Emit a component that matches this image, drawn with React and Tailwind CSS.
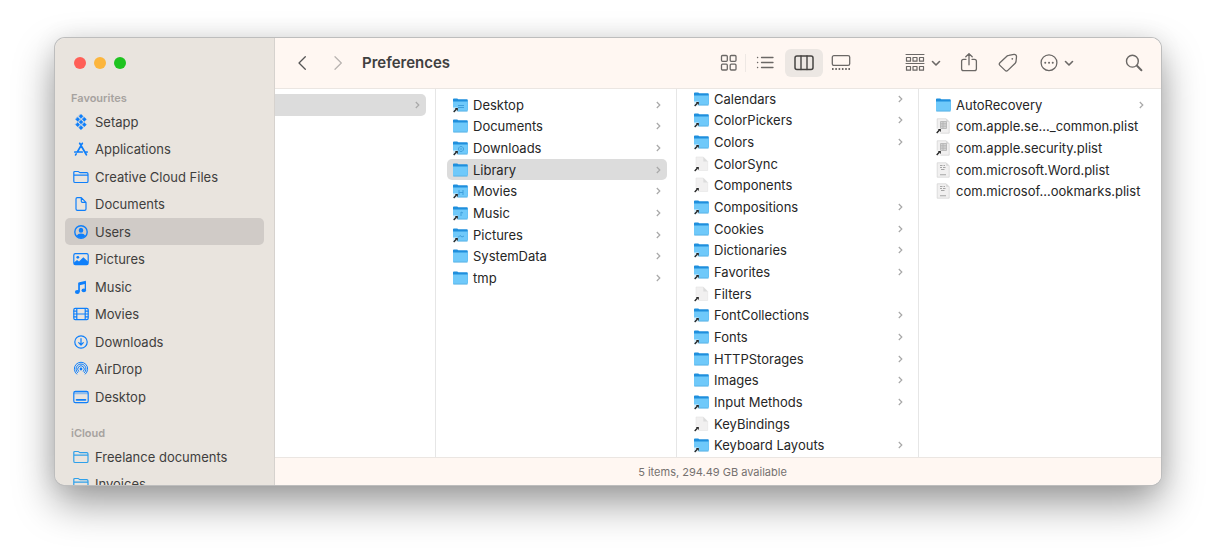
import React from 'react';

const favourites = [
  { label: 'Setapp', icon: 'setapp' },
  { label: 'Applications', icon: 'apps' },
  { label: 'Creative Cloud Files', icon: 'folder' },
  { label: 'Documents', icon: 'document' },
  { label: 'Users', icon: 'user', selected: true },
  { label: 'Pictures', icon: 'picture' },
  { label: 'Music', icon: 'music' },
  { label: 'Movies', icon: 'movie' },
  { label: 'Downloads', icon: 'download' },
  { label: 'AirDrop', icon: 'airdrop' },
  { label: 'Desktop', icon: 'desktop' }
];

const icloud = [
  { label: 'Freelance documents', icon: 'cloudFolder' },
  { label: 'Invoices', icon: 'cloudFolder' }
];

const homeItems = [
  { name: 'Desktop', kind: 'folder', alias: true, badge: 'M5 8.5h6M5 10.5h6' },
  { name: 'Documents', kind: 'folder' },
  { name: 'Downloads', kind: 'folder', alias: true, badge: 'M8 6.5a2.5 2.5 0 1 0 .01 0M8 8v2' },
  { name: 'Library', kind: 'folder', selected: true },
  { name: 'Movies', kind: 'folder', alias: true, badge: 'M6 7v5M10 7v5M6 9.5h4' },
  { name: 'Music', kind: 'folder', alias: true, badge: 'M8 11V7l2 1' },
  { name: 'Pictures', kind: 'folder', alias: true, badge: 'M5 10.5l2-2 2 1.5 2-1' },
  { name: 'SystemData', kind: 'folder' },
  { name: 'tmp', kind: 'folder' }
];

const libraryItems = [
  { name: 'Calendars', kind: 'folder', alias: true },
  { name: 'ColorPickers', kind: 'folder', alias: true },
  { name: 'Colors', kind: 'folder', alias: true },
  { name: 'ColorSync', kind: 'file', alias: true },
  { name: 'Components', kind: 'file', alias: true },
  { name: 'Compositions', kind: 'folder', alias: true },
  { name: 'Cookies', kind: 'folder' },
  { name: 'Dictionaries', kind: 'folder', alias: true },
  { name: 'Favorites', kind: 'folder', alias: true },
  { name: 'Filters', kind: 'file', alias: true },
  { name: 'FontCollections', kind: 'folder', alias: true },
  { name: 'Fonts', kind: 'folder', alias: true },
  { name: 'HTTPStorages', kind: 'folder' },
  { name: 'Images', kind: 'folder' },
  { name: 'Input Methods', kind: 'folder', alias: true },
  { name: 'KeyBindings', kind: 'file', alias: true },
  { name: 'Keyboard Layouts', kind: 'folder', alias: true }
];

const preferenceItems = [
  { name: 'AutoRecovery', kind: 'folder' },
  { name: 'com.apple.se…_common.plist', kind: 'plist', alias: true },
  { name: 'com.apple.security.plist', kind: 'plist', alias: true },
  { name: 'com.microsoft.Word.plist', kind: 'plist' },
  { name: 'com.microsof…ookmarks.plist', kind: 'plist' }
];

const folderOutline = (
  <path d="M.8 12.200V3.600c0-.7.4-1.100 1.100-1.100h3.300c.8 0 1 1.200 1.900 1.200h6.600c.8 0 1.300.5 1.300 1.200v7.300c0 .8-.5 1.300-1.300 1.300H2.100c-.8 0-1.300-.5-1.300-1.300zM.8 6.200H15" />
);

// Sidebar glyphs, all on a 16x16 grid
const glyphs = {
  setapp: (
    <path
      d="M8 .2l2.100 2.100L8 4.400 5.900 2.300zM4.700 3.200l2.100 2.100-2.100 2.100-2.100-2.100zM11.300 3.200l2.100 2.100-2.100 2.100-2.100-2.100zM8 5.900L10.100 8 8 10.100 5.900 8zM4.700 8.600l2.100 2.100-2.100 2.100-2.100-2.100zM11.300 8.600l2.100 2.100-2.100 2.100-2.100-2.100zM8 11.600l2.100 2.100L8 15.800l-2.100-2.100z"
      fill="currentColor"
      strokeWidth=".4"
    />
  ),
  apps: <path d="M9.300 2.300L4.300 11M6.700 2.300l6.700 11.500M1.800 11h7.400M11.800 11h2.400M3.200 12.900l-.6 1" strokeWidth="1.700" />,
  folder: folderOutline,
  cloudFolder: folderOutline,
  document: <path d="M3 13V3c0-.8.5-1.400 1.300-1.400h4L13 6.300V13c0 .9-.5 1.400-1.400 1.400H4.400C3.500 14.400 3 13.900 3 13zM8.300 1.800v3.400c0 .7.300 1.100 1.100 1.100h3.400" />,
  user: (
    <>
      <circle cx="8" cy="8" r="6.200" strokeWidth="1.400" />
      <path d="M8 3.700a2.300 2.500 0 0 1 0 5 2.300 2.500 0 0 1 0-5zM3.600 12.100c.8-1.700 2.500-2.500 4.400-2.500s3.600.8 4.400 2.500C11.200 13.400 9.700 14 8 14s-3.200-.6-4.400-1.900z" fill="currentColor" stroke="none" />
    </>
  ),
  picture: (
    <>
      <rect x=".8" y="2.600" width="14.400" height="11" rx="1.600" />
      <circle cx="4.800" cy="6.300" r="1.400" fill="currentColor" stroke="none" />
      <path d="M1 11.500l3-2.500 2 1.500L10.300 6.300 15 10.500V13.500H1z" fill="currentColor" stroke="none" />
    </>
  ),
  music: (
    <g fill="currentColor" stroke="none">
      <path d="M5.400 3.600L12.900 1.800v3L6.600 6.300v6H5.400z" />
      <path d="M11.700 3h1.300v8.400h-1.300zM5.400 4h1.300v9H5.400z" />
      <ellipse cx="4.300" cy="13" rx="2.400" ry="1.900" />
      <ellipse cx="10.800" cy="11.400" rx="2.300" ry="1.800" />
    </g>
  ),
  movie: (
    <>
      <rect x=".8" y="2.400" width="14.400" height="11.200" rx="1.400" />
      <path d="M3.800 2.500v11M12.200 2.500v11M3.800 8h8.400M1 5.200h2.800M1 8h2.800M1 10.800h2.800M12.200 5.200H15M12.200 8H15M12.200 10.800H15" />
    </>
  ),
  download: (
    <>
      <circle cx="8" cy="8" r="6.200" />
      <path d="M8 4.700v6M5.700 8.700L8 11l2.300-2.300" />
    </>
  ),
  airdrop: (
    <>
      <path d="M3.700 13.100A6.700 6.700 0 1 1 12.300 13.100M4.600 11.700a5 5 0 1 1 6.800 0M5.600 10.400a3.300 3.300 0 1 1 4.800 0" strokeWidth="1" />
      <circle cx="8" cy="8" r="1.400" fill="currentColor" stroke="none" />
    </>
  ),
  desktop: (
    <>
      <rect x=".8" y="2.400" width="14.400" height="11.200" rx="1.600" />
      <path d="M1 3h14v2.300H1z" fill="currentColor" fillOpacity=".4" stroke="none" />
      <path d="M3.500 10.900h9" strokeWidth="1.600" />
    </>
  )
};

function SidebarIcon({ name }) {
  return (
    <svg
      viewBox="0 0 16 16"
      className={name === 'cloudFolder' ? 'size-4 shrink-0 text-[#2fa0ea]' : 'size-4 shrink-0 text-[#0f7ffa]'}
      fill="none"
      stroke="currentColor"
      strokeWidth="1.200"
      strokeLinecap="round"
      strokeLinejoin="round"
      aria-hidden="true"
    >
      {glyphs[name]}
    </svg>
  );
}

function SidebarSection({ title, items }) {
  return (
    <section>
      <h2 className="flex h-5 items-center px-1.5 text-[11px] font-semibold text-[#a6a29f]">{title}</h2>
      <ul>
        {items.map(item => (
          <li key={item.label} className="h-[27px] even:h-[28px]">
            <a
              href="#"
              className={`flex h-full items-center gap-1.5 rounded-[5px] px-2 ${item.selected ? 'bg-[#d0cbc7]' : ''}`}
            >
              <SidebarIcon name={item.icon} />
              <span className="whitespace-nowrap">{item.label}</span>
            </a>
          </li>
        ))}
      </ul>
    </section>
  );
}

// Small black arrow in the lower left corner of aliases
function AliasArrow() {
  return (
    <>
      <path d="M0 10.500h4.500V16H0z" fill="#fff" fillOpacity=".75" />
      <path d="M.7 15l2.600-2.800" stroke="#222" strokeWidth="1.300" />
      <path d="M1.800 11h3v3z" fill="#222" />
    </>
  );
}

function FileIcon({ kind, alias, badge }) {
  return (
    <svg viewBox="0 0 16 16" className="size-4 shrink-0" fill="none" aria-hidden="true">
      {kind === 'folder' && (
        <>
          <path d="M0 2.300c0-.6.3-.9.900-.9h3.300c.7 0 .9.900 1.600.9h8.100c.6 0 .9.300.9.900V13H0z" fill="#1f8fdd" />
          <path d="M0 4.600h14.800v9c0 .4-.3.700-.7.700H.7c-.4 0-.7-.3-.7-.7z" fill="#6fc9fa" />
          <path d="M.3 14.100h14.200" stroke="#4fa9dc" strokeWidth=".7" />
          {badge && <path d={badge} stroke="#3f9fdc" strokeWidth="1" />}
        </>
      )}
      {kind === 'file' && (
        <>
          <path d="M2 1h7.300l4.400 4.400v9.100H2z" fill="#f1f0f0" stroke="#e4e4e4" strokeWidth=".6" />
          <path d="M9.300 1v4.400h4.400z" fill="#dcdcdc" />
        </>
      )}
      {kind === 'plist' && (
        <>
          <path d="M1.200.8h9l3 3v11.400h-12z" fill="#f1f0f0" stroke="#d3d3d3" strokeWidth=".7" />
          <path d="M10.200.8v3h3z" fill="#d5d5d5" />
          {alias ? (
            <path d="M4.500 3.500h6v7h-6zM4.500 5.800h6M4.500 8.200h6M7 3.500v7" fill="#d3d3d3" stroke="#b2b2b2" strokeWidth=".8" />
          ) : (
            <path d="M4 3.500h2.500M7.500 3.500H9M4 5.500h2M7 5.500h2.500M5 7.500h3.500M4 12.800h6" stroke="#a5a5a5" strokeWidth="1.100" />
          )}
        </>
      )}
      {alias && <AliasArrow />}
    </svg>
  );
}

function RowChevron() {
  return (
    <svg viewBox="0 0 5 8" className="ml-auto h-2 w-[5px] shrink-0" fill="none" stroke="#a8a8a8" strokeWidth="1.200" aria-hidden="true">
      <path d="M.8 1l3 3-3 3" />
    </svg>
  );
}

function FileList({ label, items, className }) {
  return (
    <ul aria-label={label} className={className}>
      {items.map(item => (
        <li key={item.name} className="h-[22px] nth-[3n+1]:h-[21px]">
          <button
            type="button"
            className={`flex h-full w-full items-center gap-1 rounded-[5px] px-1.5 text-left ${item.selected ? 'bg-[#dcdcdc]' : ''}`}
          >
            <FileIcon kind={item.kind} alias={item.alias} badge={item.badge} />
            <span className="whitespace-nowrap">{item.name}</span>
            {item.kind === 'folder' && <RowChevron />}
          </button>
        </li>
      ))}
    </ul>
  );
}

function ToolIcon({ children }) {
  return (
    <svg viewBox="0 0 20 20" className="size-5" fill="none" stroke="currentColor" strokeWidth="1.300" strokeLinecap="round" strokeLinejoin="round" aria-hidden="true">
      {children}
    </svg>
  );
}

function DownChevron() {
  return (
    <svg viewBox="0 0 10 10" className="size-2.5" fill="none" stroke="currentColor" strokeWidth="1.600" strokeLinecap="round" strokeLinejoin="round" aria-hidden="true">
      <path d="M1.500 3.500L5 7l3.500-3.500" />
    </svg>
  );
}

function Toolbar() {
  return (
    <header className="flex h-[51px] shrink-0 items-center border-b border-[#ebe6e2] bg-[#fff7f2] px-[17px] text-[#6b6866]">
      <button type="button" aria-label="Back" className="text-[#555]">
        <ToolIcon><path d="M13.300 3.800L7 10l6.300 6.200" /></ToolIcon>
      </button>
      <button type="button" aria-label="Forward" className="ml-4 text-[#b9b4b1]">
        <ToolIcon><path d="M7 3.800l6.300 6.200L7 16.200" /></ToolIcon>
      </button>
      <h1 className="ml-3.5 text-[15px] font-semibold text-[#404040]">Preferences</h1>

      {/* View modes */}
      <div className="ml-auto flex items-center">
        <button type="button" aria-label="Icons">
          <ToolIcon>
            <rect x="2.500" y="2.500" width="5.800" height="5.800" rx="1" />
            <rect x="11.200" y="2.500" width="5.800" height="5.800" rx="1" />
            <rect x="2.500" y="11.200" width="5.800" height="5.800" rx="1" />
            <rect x="11.200" y="11.200" width="5.800" height="5.800" rx="1" />
          </ToolIcon>
        </button>
        <span className="ml-1.5 h-[18px] w-px bg-[#eee8e4]" />
        <button type="button" aria-label="List" className="ml-[9px]">
          <ToolIcon><path d="M6.500 4.500H18M6.500 9.500H18M6.500 14.500H18M2.500 4.500h.2M2.500 9.500h.2M2.500 14.500h.2" /></ToolIcon>
        </button>
        <button type="button" aria-label="Columns" aria-pressed="true" className="ml-2.5 flex h-7 w-[38px] items-center justify-center rounded-md bg-[#ece7e3] text-[#464442]">
          <ToolIcon>
            <rect x="1" y="3" width="18" height="13.500" rx="2" strokeWidth="1.500" />
            <path d="M7 3v13.500M13 3v13.500" strokeWidth="1.400" />
          </ToolIcon>
        </button>
        <button type="button" aria-label="Gallery" className="ml-2">
          <ToolIcon>
            <rect x="1.300" y="2.700" width="17.400" height="9.700" rx="1.600" />
            <path d="M1 16h1.600M4.300 16h1.600M7.600 16h1.600M10.900 16h1.600M14.200 16h1.600M17.400 16H19" strokeWidth="1.900" strokeLinecap="butt" />
          </ToolIcon>
        </button>
      </div>

      {/* Actions */}
      <button type="button" aria-label="Group" className="ml-[54px] flex items-center gap-1.5">
        <ToolIcon>
          <path d="M1 1.500h18M1 10.500h18" strokeWidth="1.100" />
          <path d="M1.500 4.500h4v3.700h-4zM8 4.500h4v3.700H8zM14.500 4.500h4v3.700h-4zM1.500 13.500h4v3.700h-4zM8 13.500h4v3.700H8zM14.500 13.500h4v3.700h-4z" strokeWidth="1.200" />
        </ToolIcon>
        <DownChevron />
      </button>
      <button type="button" aria-label="Share" className="ml-[18px]">
        <ToolIcon>
          <path d="M7 6.300H4.500c-1.200 0-1.900.7-1.900 1.900v7.600c0 1.200.7 1.900 1.900 1.900h11c1.200 0 1.900-.7 1.900-1.900V8.200c0-1.200-.7-1.900-1.900-1.900H13M10 11.800V.8M6.800 3.700L10 .6l3.200 3.100" />
        </ToolIcon>
      </button>
      <button type="button" aria-label="Tags" className="ml-[19px]">
        <ToolIcon>
          <path d="M10.800 2.300L16 1.400c1.500-.2 2.600.8 2.500 2.300l-.5 5c-.1.700-.3 1-.8 1.500l-7.400 7.200c-.9.900-1.800.9-2.700 0l-5.200-5c-.9-.9-.9-1.800 0-2.700l7.200-6.700c.5-.4.900-.6 1.700-.7z" />
          <circle cx="14.300" cy="5.800" r=".9" fill="currentColor" stroke="none" />
        </ToolIcon>
      </button>
      <button type="button" aria-label="More" className="ml-[21px] flex items-center gap-[5px]">
        <ToolIcon>
          <circle cx="10" cy="9.700" r="7.900" />
          <path d="M6.200 9.700h.1M10 9.700h.1M13.700 9.700h.1" strokeWidth="1.900" />
        </ToolIcon>
        <DownChevron />
      </button>
      <button type="button" aria-label="Search" className="ml-[50px]">
        <ToolIcon>
          <circle cx="8.400" cy="8.200" r="5.900" strokeWidth="1.400" />
          <path d="M13 12.800l4.400 4.400" strokeWidth="2" />
        </ToolIcon>
      </button>
    </header>
  );
}

export default function App() {
  return (
    <div className="h-screen overflow-hidden bg-white px-[55px] pt-[38px] pb-[73px] font-['Inter',sans-serif] text-[13px] leading-4">
      <main className="flex h-full overflow-hidden rounded-[10px] shadow-[0_0_0_1px_#bdbdbd,0_0_24px_rgba(0,0,0,0.08),0_18px_40px_rgba(0,0,0,0.4)]">
        <nav className="w-[220px] shrink-0 overflow-hidden border-r border-[#d6d2ce] bg-[#e9e4de] px-2.5 text-[#3f3e3d]">
          <div className="flex h-[50px] items-center gap-2 pl-[9px]">
            <button type="button" aria-label="Close" className="size-3 rounded-full bg-[#ff5f57]" />
            <button type="button" aria-label="Minimise" className="size-3 rounded-full bg-[#fcb53c]" />
            <button type="button" aria-label="Zoom" className="size-3 rounded-full bg-[#1ec31f]" />
          </div>
          <div className="flex flex-col gap-[13px]">
            <SidebarSection title="Favourites" items={favourites} />
            <SidebarSection title="iCloud" items={icloud} />
          </div>
        </nav>

        <div className="flex min-w-0 flex-1 flex-col bg-white text-[#262626]">
          <Toolbar />
          <div className="grid min-h-0 flex-1 grid-cols-[161px_241px_242px_1fr]">
            <div className="overflow-hidden border-r border-[#e6e6e6] pt-[5px] pr-[9px]">
              <button type="button" aria-label="Home folder" className="flex h-[22px] w-full items-center rounded-r-[5px] bg-[#dcdcdc] px-1.5">
                <RowChevron />
              </button>
            </div>
            <div className="overflow-hidden border-r border-[#e6e6e6] pt-[5px] pr-[9px] pl-[11px]">
              <FileList label="Home" items={homeItems} />
            </div>
            <div className="overflow-hidden border-r border-[#e6e6e6] pr-[9px] pl-[11px]">
              <FileList label="Library" items={libraryItems} className="-mt-px" />
            </div>
            <div className="overflow-hidden pt-[5px] pr-[11px] pl-[11px]">
              <FileList label="Preferences" items={preferenceItems} />
            </div>
          </div>
          <footer className="flex h-7 shrink-0 items-center justify-center border-t border-[#ebe6e2] bg-[#fff7f2] pr-[11px] text-[11px] text-[#75716f]">
            5 items, 294.49 GB available
          </footer>
        </div>
      </main>
    </div>
  );
}
